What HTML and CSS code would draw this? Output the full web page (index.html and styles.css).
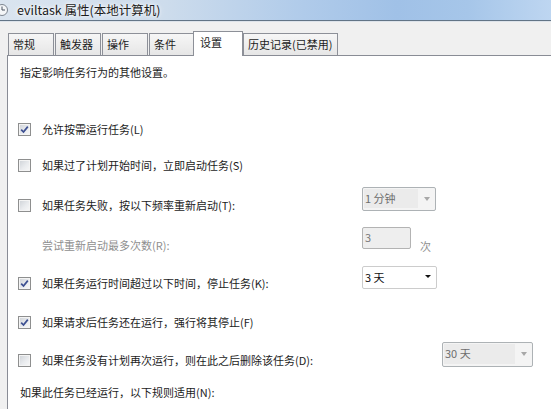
FILE: index.html
```html
<!DOCTYPE html>
<html lang="zh-CN">
<head>
<meta charset="utf-8">
<title>eviltask 属性(本地计算机)</title>
<link rel="stylesheet" href="styles.css">
</head>
<body>
<div class="window">
  <div class="titlebar">
    <svg class="title-icon" width="10" height="14" viewBox="0 0 10 14">
      <circle cx="2" cy="7" r="5.5" fill="#f4f6f8" stroke="#7d8590" stroke-width="1"/>
      <path d="M2 3.5 V7 H5" fill="none" stroke="#4a5260" stroke-width="1"/>
    </svg>
    <span class="title-text">eviltask 属性(本地计算机)</span>
  </div>
  <div class="dialog">
    <div class="tabs">
      <div class="tab">常规</div>
      <div class="tab">触发器</div>
      <div class="tab">操作</div>
      <div class="tab">条件</div>
      <div class="tab tab-active">设置</div>
      <div class="tab">历史记录(已禁用)</div>
    </div>
    <div class="panel">
      <div class="row note">指定影响任务行为的其他设置。</div>

      <div class="row r1">
        <span class="check checked"><svg width="11" height="11" viewBox="0 0 11 11"><path d="M2.2 5.6 L4.5 8 L8.8 2.6" fill="none" stroke="#3c4f91" stroke-width="1.7"/></svg></span>
        <span class="label">允许按需运行任务(L)</span>
      </div>

      <div class="row r2">
        <span class="check"></span>
        <span class="label">如果过了计划开始时间，立即启动任务(S)</span>
      </div>

      <div class="row r3">
        <span class="check"></span>
        <span class="label">如果任务失败，按以下频率重新启动(T):</span>
        <span class="combo disabled"><span class="combo-text">1 分钟</span><span class="arrow"></span></span>
      </div>

      <div class="row r4">
        <span></span>
        <span class="label muted">尝试重新启动最多次数(R):</span>
        <span class="field disabled">3</span>
        <span class="unit">次</span>
      </div>

      <div class="row r5">
        <span class="check checked"><svg width="11" height="11" viewBox="0 0 11 11"><path d="M2.2 5.6 L4.5 8 L8.8 2.6" fill="none" stroke="#3c4f91" stroke-width="1.7"/></svg></span>
        <span class="label">如果任务运行时间超过以下时间，停止任务(K):</span>
        <span class="combo enabled"><span class="combo-text">3 天</span><span class="arrow"></span></span>
      </div>

      <div class="row r6">
        <span class="check checked"><svg width="11" height="11" viewBox="0 0 11 11"><path d="M2.2 5.6 L4.5 8 L8.8 2.6" fill="none" stroke="#3c4f91" stroke-width="1.7"/></svg></span>
        <span class="label">如果请求后任务还在运行，强行将其停止(F)</span>
      </div>

      <div class="row r7 wide">
        <span class="check"></span>
        <span class="label">如果任务没有计划再次运行，则在此之后删除该任务(D):</span>
        <span class="combo disabled long"><span class="combo-text">30 天</span><span class="arrow"></span></span>
      </div>

      <div class="row note r8">如果此任务已经运行，以下规则适用(N):</div>
    </div>
  </div>
</div>
</body>
</html>
```
FILE: styles.css
```css
html, body {
  margin: 0;
  padding: 0;
}
body {
  width: 551px;
  height: 409px;
  overflow: hidden;
  background: #f0f0f0;
  font-family: "Noto Sans CJK SC", "Noto Sans", sans-serif;
  font-size: 11px;
  color: #1c1c1c;
}
.window {
  display: flex;
  flex-direction: column;
  height: 409px;
}
.titlebar {
  height: 20px;
  flex: none;
  display: flex;
  align-items: center;
  background: linear-gradient(90deg, #dae4ef 0%, #cddcec 30%, #b0cbea 55%, #a0c1e7 72%, #a6c6e9 85%, #bed6f1 100%);
  border-bottom: 1px solid #627486;
}
.title-icon {
  flex: none;
  margin-right: 7px;
}
.title-text {
  font-size: 12.5px;
  color: #1b1b1b;
  line-height: 20px;
  text-shadow: 0 0 6px #ffffff, 0 0 3px #ffffff;
}
.dialog {
  flex: 1;
  display: flex;
  flex-direction: column;
  border-top: 1px solid #dde3ea;
  padding: 9px 0 0 7px;
}
.tabs {
  display: flex;
  align-items: flex-end;
  height: 24px;
  padding-left: 1px;
}
.tab {
  box-sizing: border-box;
  height: 22px;
  min-width: 46px;
  padding: 0 5px 0 4px;
  border: 1px solid #8d9098;
  border-bottom: none;
  margin-right: 1px;
  background: linear-gradient(#f6f6f6, #e6e6e6);
  line-height: 20px;
  white-space: nowrap;
}
.tab-active {
  position: relative;
  z-index: 1;
  height: 25px;
  min-width: 50px;
  margin: 0 -2px -1px -3px;
  padding: 0 6px;
  background: #ffffff;
  line-height: 21px;
}
.tab-active + .tab {
  margin-left: 2px;
}
.panel {
  flex: 1;
  background: #ffffff;
  border-top: 1px solid #898c95;
  border-left: 1px solid #898c95;
  padding: 4px 0 0 10px;
}
.row {
  height: 24px;
  display: grid;
  grid-template-columns: 24px 320px auto auto;
  justify-content: start;
  align-items: center;
  white-space: nowrap;
}
.row.wide {
  grid-template-columns: 24px 400px auto;
}
.note {
  display: block;
  line-height: 24px;
  padding-left: 2px;
}
.r1 { margin-top: 33px; }
.r2 { margin-top: 12px; }
.r3 { margin-top: 16px; }
.r4 { margin-top: 16px; }
.r5 { margin-top: 14px; }
.r6 { margin-top: 15px; }
.r7 { margin-top: 14px; }
.r8 { margin-top: 8px; }

.check {
  box-sizing: border-box;
  width: 13px;
  height: 13px;
  border: 1px solid #8e8f8f;
  background: linear-gradient(135deg, #cdd1d6 0%, #e9ebee 55%, #f8f8f8 100%);
  box-shadow: inset 0 0 0 1px #f4f4f4;
  display: flex;
  align-items: center;
  justify-content: center;
}
.check svg {
  display: block;
}
.label {
  line-height: 24px;
}
.muted {
  color: #8f8f8f;
}
.combo {
  box-sizing: border-box;
  width: 74px;
  height: 24px;
  margin-top: -12px;
  display: flex;
  align-items: stretch;
  border: 1px solid #adb2b5;
  border-radius: 2px;
  background: #f4f4f4;
  padding: 1px 0 2px 1px;
}
.combo.long {
  width: 91px;
  height: 25px;
}
.combo-text {
  flex: 1;
  background: #ebebeb;
  color: #6e6e6e;
  line-height: 19px;
  padding-left: 1px;
}
.arrow {
  width: 17px;
  flex: none;
  display: flex;
  align-items: center;
  justify-content: center;
}
.arrow::after {
  content: "";
  border-left: 3.5px solid transparent;
  border-right: 3.5px solid transparent;
  border-top: 4px solid #a8a8a8;
}
.combo.enabled {
  width: 75px;
  height: 23px;
  background: #ffffff;
  border-color: #cccccc;
}
.combo.enabled .combo-text {
  background: #ffffff;
  color: #111111;
}
.combo.enabled .arrow::after {
  border-left-width: 3px;
  border-right-width: 3px;
  border-top: 3px solid #111111;
}
.field {
  box-sizing: border-box;
  width: 49px;
  height: 22px;
  margin-top: -14px;
  border: 1px solid #b3b3b3;
  border-radius: 2px;
  background: #eeeeee;
  color: #7a7a7a;
  line-height: 19px;
  padding-left: 2px;
}
.unit {
  color: #8f8f8f;
  margin-left: 9px;
  margin-top: 2px;
}
```
